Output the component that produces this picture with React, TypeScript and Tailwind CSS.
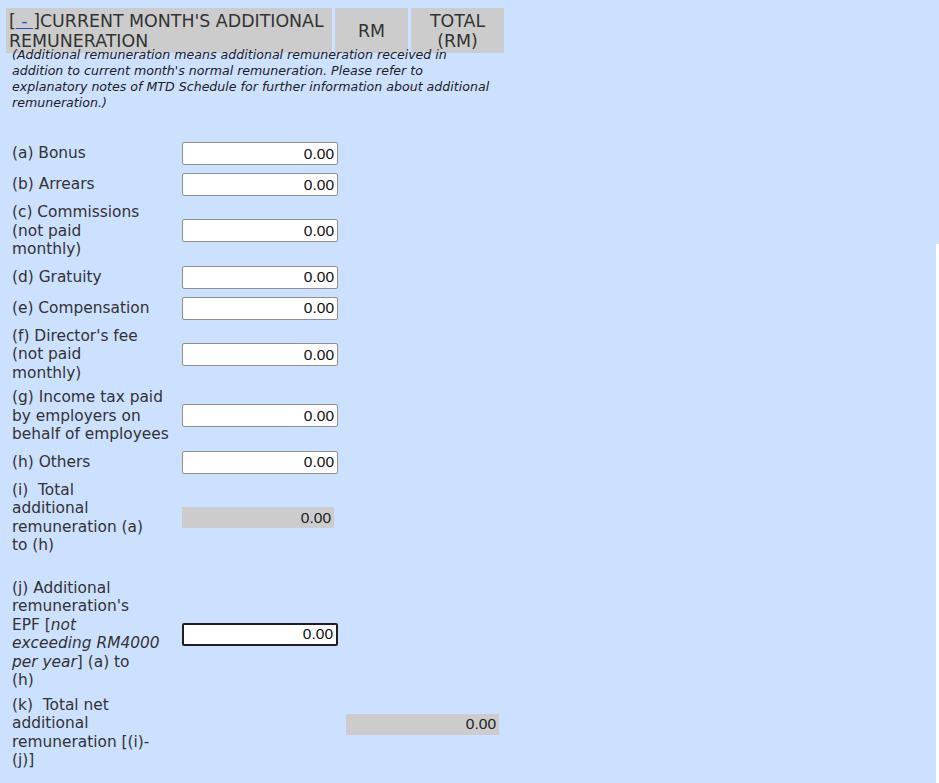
import React, { FC, ReactNode } from 'react';

interface RowProps {
  label: ReactNode;
  children?: ReactNode;
  top?: boolean;
}

// one label / field pair of the additional remuneration table
const Row: FC<RowProps> = ({ label, children, top }) => (
  <div className={`flex min-h-[31px] py-[3px] ${top ? 'items-start' : 'items-center'}`}>
    <div className="w-[176px] shrink-0 pl-[6px] text-[15.4px] leading-[18.5px] text-[#333]">{label}</div>
    {children}
  </div>
);

const AmountInput: FC<{ focused?: boolean }> = ({ focused }) => (
  <input
    type="text"
    defaultValue="0.00"
    className={`h-[23px] w-[156px] rounded-[2px] bg-white pr-[3px] text-right text-[15.5px] text-[#111] outline-none [font-family:'Liberation_Sans',Arial,sans-serif] ${
      focused ? 'border-2 border-[#1f1f1f]' : 'border border-[#8f8f8f]'
    }`}
  />
);

const TotalBox: FC<{ className?: string }> = ({ className }) => (
  <div
    className={`flex h-[21px] items-center justify-end bg-[#cccccc] pr-[3px] text-[15.5px] text-[#222] [font-family:'Liberation_Sans',Arial,sans-serif] ${className ?? ''}`}
  >
    0.00
  </div>
);

export default function App() {
  return (
    <div className="flex min-h-screen bg-[#cce0ff] [font-family:'DejaVu_Sans',Verdana,sans-serif]">
      <div className="flex-1 pl-[6px] pt-[8px]">
        {/* section header */}
        <div className="flex gap-[3px] text-[17.4px] leading-[20px] text-[#333]">
          <div className="h-[45px] w-[326px] bg-[#cccccc] pl-[3px] pt-[3px]">
            [<a href="#" className="text-[#2a4fd6] underline">&nbsp;-&nbsp;</a>]CURRENT MONTH'S ADDITIONAL REMUNERATION
          </div>
          <div className="flex h-[45px] w-[73px] items-center justify-center bg-[#cccccc]">RM</div>
          <div className="flex h-[45px] w-[93px] items-center justify-center bg-[#cccccc] text-center">
            TOTAL
            <br />
            (RM)
          </div>
        </div>

        <p className="-mt-[6px] pl-[6px] text-[12.6px] italic leading-[16px] whitespace-nowrap text-[#222]">
          (Additional remuneration means additional remuneration received in
          <br />
          addition to current month's normal remuneration. Please refer to
          <br />
          explanatory notes of MTD Schedule for further information about additional
          <br />
          remuneration.)
        </p>

        <div className="mt-[27px] flex flex-col">
          <Row label="(a) Bonus">
            <AmountInput />
          </Row>
          <Row label="(b) Arrears">
            <AmountInput />
          </Row>
          <Row
            label={
              <>
                (c) Commissions
                <br />
                (not paid
                <br />
                monthly)
              </>
            }
          >
            <AmountInput />
          </Row>
          <Row label="(d) Gratuity">
            <AmountInput />
          </Row>
          <Row label="(e) Compensation">
            <AmountInput />
          </Row>
          <Row
            label={
              <>
                (f) Director's fee
                <br />
                (not paid
                <br />
                monthly)
              </>
            }
          >
            <AmountInput />
          </Row>
          <Row
            label={
              <>
                (g) Income tax paid
                <br />
                by employers on
                <br />
                behalf of employees
              </>
            }
          >
            <AmountInput />
          </Row>
          <Row label="(h) Others">
            <AmountInput />
          </Row>
          <Row
            label={
              <>
                (i)&nbsp; Total
                <br />
                additional
                <br />
                remuneration (a)
                <br />
                to (h)
              </>
            }
          >
            <TotalBox className="w-[152px]" />
          </Row>

          <div className="h-[18px]" />

          <Row
            label={
              <>
                (j) Additional
                <br />
                remuneration's
                <br />
                EPF [<i>not</i>
                <br />
                <i>exceeding RM4000</i>
                <br />
                <i>per year</i>] (a) to
                <br />
                (h)
              </>
            }
          >
            <AmountInput focused />
          </Row>
          <Row
            top
            label={
              <>
                (k)&nbsp; Total net
                <br />
                additional
                <br />
                remuneration [(i)-
                <br />
                (j)]
              </>
            }
          >
            <TotalBox className="ml-[164px] mt-[18px] w-[153px]" />
          </Row>
        </div>
      </div>
      <div className="mt-[244px] w-[3px] shrink-0 bg-white" />
    </div>
  );
}
